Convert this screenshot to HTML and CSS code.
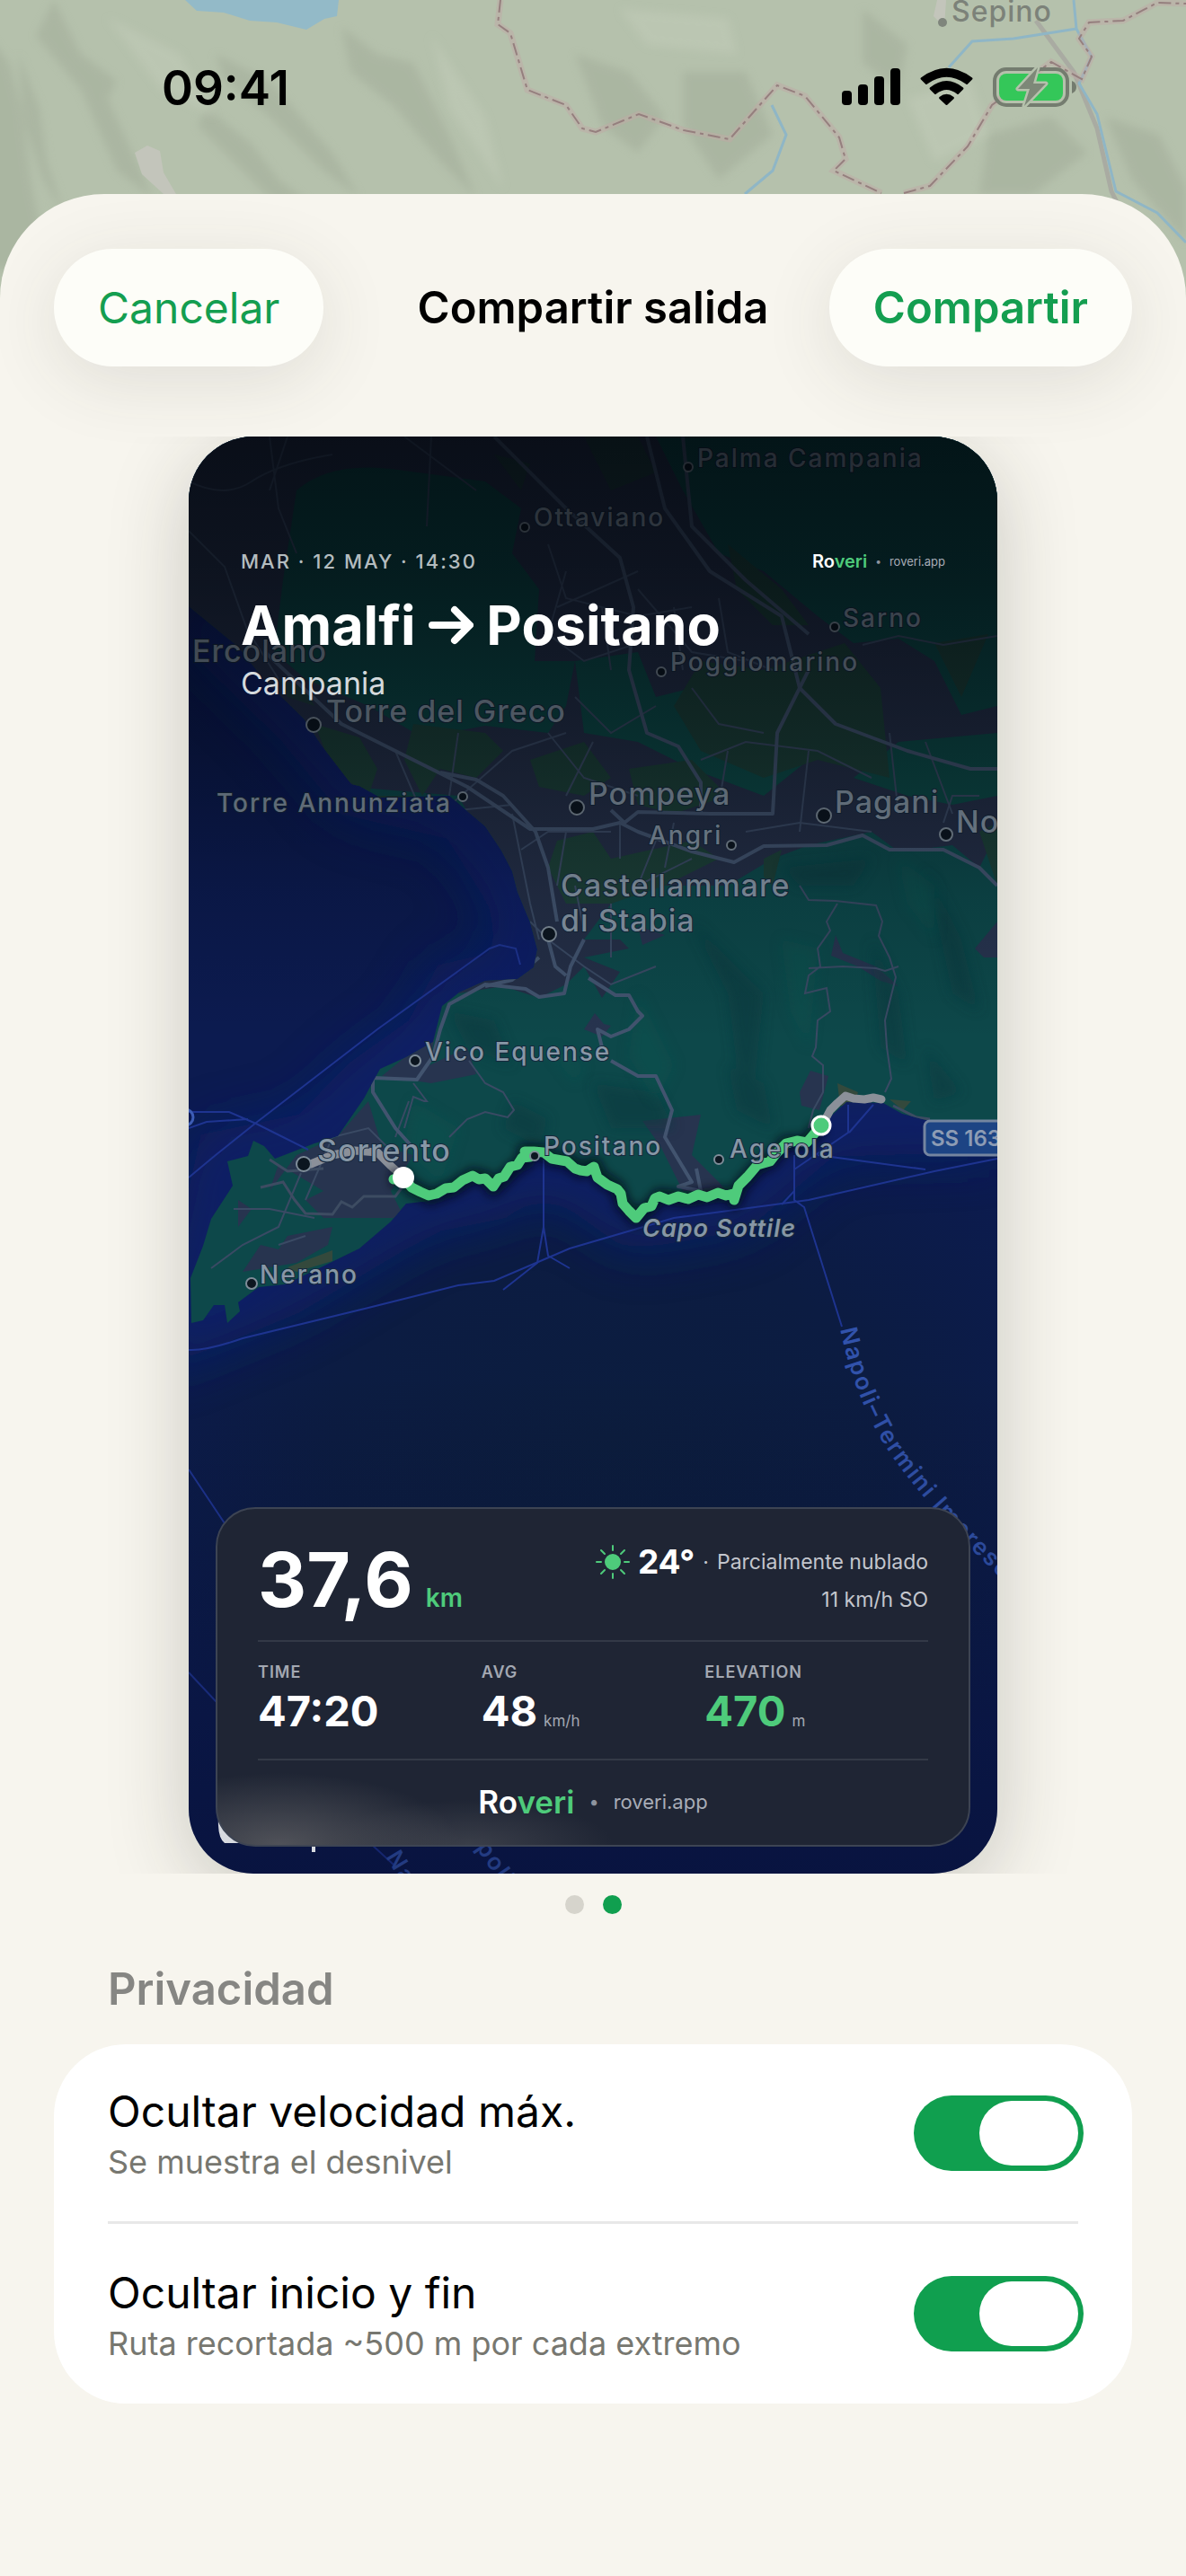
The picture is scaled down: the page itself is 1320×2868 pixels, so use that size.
FILE: index.html
```html
<!DOCTYPE html>
<html lang="es">
<head>
  <meta charset="UTF-8">
  <meta name="viewport" content="width=device-width,initial-scale=1">
  <title>Roveri - Compartir salida</title>
  <link rel="stylesheet" href="styles.css">
</head>
<body>
  <!-- Map behind the sheet -->
  <svg class="backdrop" viewBox="0 0 1320 400" preserveAspectRatio="xMidYMin slice" aria-hidden="true">
    <defs>
      <filter id="soft" x="-20%" y="-20%" width="140%" height="140%"><feGaussianBlur stdDeviation="5"/></filter>
    </defs>
    <rect width="1320" height="400" fill="#b5c1ac"/>
    <g fill="#a4af9b" opacity=".6" filter="url(#soft)">
      <path d="M-20 30l30 40 14 50 10 80 20 100H-20z"/>
      <path d="M20 60l24 60 8 60 20 60-24-40-20-60z"/>
      <path d="M60 0l30 60 40 30-10 20 50 110-40-30-40-90-50-60z"/>
      <path d="M230 120l50 40 30 40 40 30h-40l-50-50-40-40z"/>
      <path d="M240 60l60 30 70 80 30 50-40-30-60-60-50-40z"/>
      <path d="M380 30l40 30 40 10 40 80 30 70-40-40-50-60-50-40z"/>
      <path d="M640 60l60 20 40 50-30 40-40-30zM760 80l70 0 30 70-60 50-40-60z"/>
      <path d="M960 10l50 40-10 50-40-30zM1100 150l70-20 40 40-60 46-60 0z"/>
      <path d="M1230 130l60 20 30 60v60l-60-70z"/>
    </g>
    <g fill="#c2ccb9" opacity=".5" filter="url(#soft)">
      <path d="M120 20l80 40 40 70-60-30zM480 40l60 90 20 80-60-90zM690 10l120 10 10 40-100-10zM1010 110l70-20 20 60-60 30z"/>
    </g>
    <path d="M206 0l13 12 30 2 29 9 30 2 33 8 20-12 14-3 2-18z" fill="#93bac8"/>
    <path d="M150 170l14-8 14 6 4 24 14 24h-14l-24-22z" fill="#c3c5bb"/>
    <path d="M1043 0h10l-2 30-12-12z" fill="#c3c5bb"/>
    <path d="M1153 23l42 57 26 63 16 70 20 40" fill="none" stroke="#a9aba2" stroke-width="5"/>
    <g fill="none" stroke="#8fb6c6" stroke-width="3">
      <path d="M1195 0l3 32 17 31-14 30 20 34 21 86 46 24 32 33"/>
      <path d="M1198 32l-70 11-46 3-26 29"/>
      <path d="M859 117l16 33-15 40-31 26"/>
    </g>
    <g fill="none" stroke="#bfa9a6" stroke-width="7" opacity=".5">
      <path id="border" d="M557 0l-3 27 14 10 19 63 43 17 18 26 15 4 48-20 50 18 51 10 53-60 31 12 38 46 7 24-13 13 53 25M1006 215l29-8 42-44 27-46 66-48 34 19 11-25-14-20 11-18 38-2 38-20 32 1"/>
    </g>
    <use href="#border" fill="none" stroke="#957f7e" stroke-width="2" stroke-dasharray="14 5 4 5"/>
    <circle cx="1049" cy="25" r="5" fill="#7f857c"/>
    <text class="backdrop-label" x="1059" y="24">Sepino</text>
  </svg>

  <div class="statusbar">
    <span class="clock">09:41</span>
    <svg class="status-icons" viewBox="0 0 264 46" aria-hidden="true">
      <rect x="0" y="27" width="11" height="16" rx="4"/>
      <rect x="18" y="20" width="11" height="23" rx="4"/>
      <rect x="36" y="11" width="11" height="32" rx="4"/>
      <rect x="54" y="2" width="11" height="41" rx="4"/>
      <path d="M88 12.500Q116.500-9 145 12.500q1 1 0 2l-5 5q-1 1-2 0-21.500-15.500-43 0-1 1-2 0l-5-5q-1-1 0-2z"/>
      <path d="M98 23.500q18.500-15 37 0 1 1 0 2l-5 5q-1 1-2 0-11.500-9-23 0-1 1-2 0l-5-5q-1-1 0-2z"/>
      <path d="M108.500 34q8-6.500 16 0 1 1 0 2l-7 6.500q-1 1-2 0l-7-6.500q-1-1 0-2z"/>
      <rect x="170" y="3" width="81" height="40" rx="13" fill="none" stroke="#747c6f" stroke-width="4"/>
      <path d="M256 16q5 2 5 7t-5 7z" fill="#747c6f"/>
      <rect x="175" y="8" width="71" height="30" rx="8" fill="#34c759"/>
      <path d="M218 1l-22 24h13l-6 19 24-25h-14z" fill="#7d8878" stroke="#b5c1ac" stroke-width="5" paint-order="stroke" stroke-linejoin="round"/>
    </svg>
  </div>

  <main class="sheet">
    <header class="toolbar">
      <button type="button" class="pill">Cancelar</button>
      <h1>Compartir salida</h1>
      <button type="button" class="pill pill-main">Compartir</button>
    </header>

    <div class="carousel">
      <article class="story">
        <svg class="map" viewBox="0 0 900 1600" preserveAspectRatio="xMidYMid slice" aria-hidden="true">
          <defs>
            <radialGradient id="sea" gradientUnits="userSpaceOnUse" cx="470" cy="1130" r="620" gradientTransform="translate(0 330) scale(1 .7)">
              <stop offset="0" stop-color="#0c1d3e"/>
              <stop offset=".5" stop-color="#0c1c42"/>
              <stop offset="1" stop-color="#0c1b50"/>
            </radialGradient>
            <linearGradient id="shade" x1="0" y1="0" x2="0" y2="1">
              <stop offset="0" stop-color="#000308" stop-opacity=".74"/>
              <stop offset=".1" stop-color="#000308" stop-opacity=".62"/>
              <stop offset=".22" stop-color="#000308" stop-opacity=".38"/>
              <stop offset=".32" stop-color="#000308" stop-opacity=".14"/>
              <stop offset=".42" stop-color="#000308" stop-opacity="0"/>
              <stop offset=".65" stop-color="#000308" stop-opacity="0"/>
              <stop offset="1" stop-color="#00031c" stop-opacity=".3"/>
            </linearGradient>
            <filter id="glow" x="-20%" y="-20%" width="140%" height="140%"><feGaussianBlur stdDeviation="30"/></filter>
            <filter id="hills" x="-20%" y="-20%" width="140%" height="140%"><feGaussianBlur stdDeviation="7"/></filter>
            <filter id="dim" x="-20%" y="-40%" width="140%" height="180%"><feGaussianBlur stdDeviation="5"/></filter>
            <clipPath id="land-clip"><use href="#land"/></clipPath>
            <path id="ferry" d="M725 994Q745 1086 790 1145Q838 1210 920 1286"/>
            <path id="ferry-b" d="M219 1581L290 1700"/>
            <path id="ferry-c" d="M310 1557L386 1669"/>
          </defs>

          <rect width="900" height="1600" fill="url(#sea)"/>
          <path d="M0 189L128 314 190 389 310 417 366 507 388 571 366 604 301 619 272 674 202 724 140 787 43 807 3 987 107 944 225 874 269 851 339 837 395 797 498 870 606 850 704 767 900 761" fill="none" stroke="#0e2070" stroke-width="70" opacity=".8" filter="url(#glow)"/>

          <path id="land" fill="#0d484a" d="M0 0V189L55 234 84 271 128 314 148 344 181 387 190 389 213 402 290 400 310 417 330 434 348 461 360 484 366 507 380 541 388 571 384 591 366 604 330 606 301 619 282 634 272 674 242 691 213 704 202 724 195 737 166 779 140 787 96 804 84 790 72 784 66 801 43 807 49 834 25 871 16 901 2 937 3 987 16 984 28 967 40 967 43 987 57 974 55 964 78 947 107 944 143 927 190 904 225 874 242 854 269 851 295 837 316 823 339 837 366 812 377 806 395 800 421 807 436 817 457 824 477 837 483 854 498 870 515 857 524 846 556 849 606 844 615 834 633 814 665 787 688 786 704 767 721 751 732 741 773 742 794 754 820 761 900 761V0z"/>

          <g clip-path="url(#land-clip)">
            <!-- built up plain -->
            <path fill="#242f47" d="M0 0H900V440L880 480 850 455 790 462 760 440 690 455 650 470 600 500 520 500 470 520 440 560 480 560 490 570 440 580 480 596 460 625 440 590 420 610 390 625 350 612 300 620 250 620 380 540 300 400 180 390 0 200z"/>
            <path fill="#0c4745" d="M120 60Q160 25 240 38L330 50 370 80 360 130 390 170 385 250 430 250 420 300 400 330 330 322 260 335 200 300 130 270 95 240 105 160z"/>
            <path fill="#0c4745" d="M520 0H900V300L860 310 830 250 790 225 740 230 700 200 640 150 590 130 550 60z"/>
            <path fill="#0d4a47" d="M430 250L500 240 520 290 600 270 680 320 690 360 640 400 560 370 500 340 440 330zM740 380L790 340 900 330V400L850 410 800 400z"/>
            <path fill="#1c4038" d="M600 120L660 170 690 210 650 210 610 170zM540 300L570 250 640 260 730 230 770 280 780 380 700 360 640 380 570 350zM830 230L890 220 860 290z"/>
            <path fill="#1c4038" d="M140 320L190 335 210 370 200 400 160 370zM250 320L330 330 350 350 320 380 280 370 260 400 240 360zM200 400L250 400 300 450 340 470 370 550 340 520 320 430zM410 450L450 440 470 470 560 450 590 470 530 500 470 520 420 520 400 480zM380 360L440 340 470 380 440 400 390 390zM490 370L560 360 600 400 540 420 500 410zM640 470L660 460 650 500 640 490zM880 440L900 430V500z"/>
            <path fill="#1c4038" d="M100 270L130 280 140 300 110 290zM440 0H500L520 40 470 60zM340 20L380 30 370 60z" opacity=".7"/>
            <!-- villages and valleys -->
            <path fill="#27344f" d="M242 690L275 660 268 700 310 680 320 710 270 720 215 712zM166 779L200 740 215 790 250 800 225 840 240 870 150 870 130 850 150 840 100 810 90 840 120 800zM505 762L570 755 560 800 590 830 600 842 550 840 525 790zM440 660L452 642 462 654 470 656 460 668zM680 730L692 706 712 712 702 750 682 745zM715 578L720 555 728 575 765 590 790 612 770 606 745 590zM875 570L900 540V580L885 580zM110 890L160 880 155 900 120 920 60 930 80 900 100 905zM55 850L70 860 55 880zM500 545L530 555 505 566z"/>
            <path fill="#34493c" d="M110 925L160 906V918L120 930zM722 720L745 730 740 745 725 745zM780 738L804 740 795 750z"/>
            <!-- hillshade -->
            <g fill="#0a3a40" opacity=".6" filter="url(#hills)">
              <path d="M560 540L610 590 640 620 630 720 610 700 600 620zM760 560L790 620 800 700 770 680zM820 480L860 560 880 640 850 620zM450 720L520 730 540 770 470 770zM360 740L400 760 390 790 350 770zM600 700L640 720 650 770 610 750zM290 640L340 650 360 700 310 680zM820 680L860 730 830 740zM660 480L760 470 740 500 680 500z"/>
            </g>
            <g fill="#10534f" opacity=".5" filter="url(#hills)">
              <path d="M500 620L540 700 520 740 490 690zM660 560L700 570 690 680 670 640zM790 470L830 500 830 560 800 520zM400 680L440 700 430 720zM250 740L300 770 280 830 240 790z"/>
            </g>
            <!-- minor roads -->
            <g fill="none" stroke="#3a4a64" stroke-width="2">
              <path d="M0 50Q40 70 70 50T160 20M90 0L100 80 120 130M0 105L40 145 65 215 100 270M110 0L90 60M270 0L265 100M240 0L320 60"/>
              <path d="M400 120L420 180 500 200 560 190M420 150L400 220 440 250 500 230M410 190L500 150M460 190L470 260M500 170L560 240 620 250M540 190L550 260M590 180L600 240 650 260M750 232L790 222 840 232 900 222"/>
              <path d="M430 290L470 330 520 300M400 330L440 380 500 400M450 340L420 400M560 280L590 320 640 330M570 360L620 340 700 350 760 380M600 350L590 410M690 350L680 440M780 330L790 420M820 340L850 420M230 350L260 420 360 410M300 330L290 400M280 420L360 350 420 330"/>
              <path d="M360 420L380 520 390 560M370 460L400 440 470 440M380 540L400 560 440 590 470 610 520 590M430 500L440 550M470 520L470 580M420 440L410 500M520 450L500 500 560 470M620 440L680 430 760 440M840 430L850 400 880 400M480 430L480 470M540 430L530 480"/>
              <path d="M680 500L690 516 720 517 765 522 772 540 768 556 780 580 787 602 775 650 777 680 782 715 775 730"/>
              <path d="M722 520L710 540 714 550 700 570 703 590 690 600 686 620 710 614 714 640 700 650 698 680 694 690 706 700V730L695 750 690 770M690 592L728 590 765 592 775 595 790 590"/>
              <path d="M312 695L330 720 350 730 362 750 355 758 330 752 310 760 290 780M250 720L265 740 262 740 250 735 240 770M245 740L230 780M130 850L160 780 200 770 230 800M125 820L100 880 60 900 25 926M50 860L90 860 140 870M100 900L130 890"/>
            </g>
            <!-- main roads -->
            <g fill="none" stroke="#42546f" stroke-width="4" stroke-linejoin="round">
              <path d="M340 0L420 80 480 135 495 190 490 260 510 330 545 345 570 385 570 420"/>
              <path d="M510 0L530 80 580 150 660 200 680 280 720 320 800 350 870 370 900 370"/>
              <path d="M550 0L560 100 620 160 690 220M85 240L170 320 310 390 380 437 450 437 480 430 500 440 560 462 607 474 640 456 710 455 750 444 780 460 840 460 880 480 900 500M280 374L320 382 350 400 386 440 400 480 410 540"/>
              <path d="M690 260L655 330 650 420 580 420 500 418 485 430 470 416"/>
              <path d="M445 603L475 622 490 622 500 640 505 645 490 660 470 668 455 660 460 680M470 695L500 712 520 712 538 750 530 780 548 810 560 830 545 835 570 840 565 815"/>
              <path d="M400 560L408 590 420 600M440 560L425 590 418 620 390 624 375 615 330 610 290 632 280 660 272 690 254 716 205 714 205 730 230 770 248 790"/>
              <path d="M330 612L360 605 390 580"/>
            </g>
            <g fill="none" stroke="#3d4c62" stroke-width="3">
              <path d="M90 805L110 818 150 815M80 836L105 830 118 850 130 865 160 866 170 852 182 858 195 846 230 846 242 830M730 745L760 742M784 745L810 758 825 760"/>
            </g>
          </g>

          <!-- ferry lines -->
          <g fill="none" stroke="#1e3490" stroke-width="2">
            <path d="M369 588L364 570 346 566 335 570 210 660 75 764 30 800 0 825"/>
            <path d="M0 752L45 752 75 765 105 780 133 794M0 770L20 763 66 760M395 805V880L388 920 350 950M395 880L400 912 424 926"/>
            <path d="M0 1017Q20 1018 60 1004L200 970 300 945 340 940 424 904 540 870 690 850 830 818 900 804"/>
            <path d="M674 800V850L685 858 727 991M734 744V775L674 816M762 744L735 775M674 840L660 855M700 800L820 816M0 1150L40 1210 60 1250M0 1376L30 1408 130 1500 228 1590"/>
          </g>
          <text class="ferry-label"><textPath href="#ferry">Napoli–Termini Imerese</textPath></text>
          <text class="ferry-label"><textPath href="#ferry-b">Napoli</textPath></text>
          <text class="ferry-label"><textPath href="#ferry-c">apoli</textPath></text>

          <!-- trimmed ends of the ride -->
          <g fill="none" stroke="#8b9099" stroke-width="9" stroke-linecap="round" stroke-linejoin="round">
            <path d="M136 810L160 800 185 795 210 797 225 812 236 822M706 765L714 750 722 742 731 734 740 737 752 738 762 736 771 738"/>
          </g>

          <path d="M224 827L239 825 248 836 269 847 295 837 316 823 330 826 339 837 351 826 366 812 377 806 374 796 395 797 404 804 421 807 436 817 451 811 457 824 477 837 483 854 498 870 515 857 524 846 556 849 589 844 606 844 607 851 615 834 633 814 647 807 665 787 688 786 704 767" fill="none" stroke="#020814" stroke-width="18" stroke-linejoin="round" opacity=".7" filter="url(#dim)"/>
          <path d="M228 827L239 825 248 836 258 841 267 845 276 843 286 837 295 836 305 828 316 823 323 827 330 826 339 835 345 826 351 824 358 813 366 811 371 803 380 802 374 796 384 796 395 797 404 804 421 807 430 815 436 817 443 818 451 813 455 825 466 833 477 838 481 843 483 854 490 862 498 870 507 859 515 857 519 848 524 846 534 850 545 846 556 849 567 844 577 847 589 842 598 845 606 843 607 850 612 834 622 824 633 811 647 807 654 798 665 787 677 784 688 786 694 779 704 767" fill="none" stroke="#4ecb7b" stroke-width="11" stroke-linejoin="round" stroke-linecap="round"/>

          <!-- places -->
          <g class="place-dots">
            <circle cx="556" cy="34" r="5"/><circle cx="374" cy="101" r="5"/><circle cx="719" cy="212" r="5"/>
            <circle cx="526" cy="262" r="5"/><circle cx="139" cy="321" r="8"/><circle cx="305" cy="401" r="5"/>
            <circle cx="432" cy="413" r="8"/><circle cx="707" cy="422" r="8"/><circle cx="843" cy="443" r="7"/>
            <circle cx="604" cy="455" r="5"/><circle cx="401" cy="554" r="8"/><circle cx="252" cy="695" r="6"/>
            <circle cx="128" cy="810" r="8"/><circle cx="385" cy="801" r="5"/><circle cx="590" cy="805" r="5"/>
            <circle cx="70" cy="943" r="6"/>
          </g>
          <g class="place">
            <text x="566" y="34">Palma Campania</text>
            <text x="384" y="100">Ottaviano</text>
            <text x="728" y="212">Sarno</text>
            <text x="536" y="261">Poggiomarino</text>
            <text x="31" y="418">Torre Annunziata</text>
            <text x="512" y="454">Angri</text>
            <text x="263" y="695">Vico Equense</text>
            <text x="395" y="800">Positano</text>
            <text x="602" y="803">Agerola</text>
            <text x="79" y="943">Nerano</text>
            <text class="cape" x="505" y="891">Capo Sottile</text>
          </g>
          <g class="place town">
            <text x="154" y="251" text-anchor="end">Ercolano</text>
            <text x="153" y="318">Torre del Greco</text>
            <text x="445" y="410">Pompeya</text>
            <text x="719" y="419">Pagani</text>
            <text x="854" y="441">No</text>
            <text x="414" y="512">Castellammare</text>
            <text x="414" y="551">di Stabia</text>
            <text x="143" y="807">Sorrento</text>
          </g>
          <rect x="819" y="762" width="110" height="38" rx="6" fill="#1d4484" stroke="#7585a0" stroke-width="3"/>
          <text class="road-no" x="826" y="790">SS 163</text>
          <circle cx="-4" cy="758" r="9" fill="none" stroke="#3d5db5" stroke-width="3"/>

          <rect width="900" height="1600" fill="url(#shade)"/>
          <circle cx="239" cy="825" r="12" fill="#fff"/>
          <circle cx="704" cy="767" r="10" fill="#4ecb7b" stroke="#fff" stroke-width="3"/>
          <path d="M33 1538Q32 1560 40 1566L60 1566V1538zM137 1566h4v10h-4z" fill="#d7dae0"/>
        </svg>

        <div class="story-head">
          <div class="story-meta">
            <span class="date">MAR · 12 MAY · 14:30</span>
            <span class="brand brand-small"><b>Ro<i>veri</i></b> <span class="sep">•</span> <span class="url">roveri.app</span></span>
          </div>
          <h2>Amalfi
            <svg class="arrow" viewBox="0 0 50 44" role="img" aria-label="a"><path d="M4 22H44M29 5L46 22 29 39"/></svg>
            Positano</h2>
          <p>Campania</p>
        </div>

        <div class="panel">
          <div class="summary">
            <div class="distance">37,6<span>km</span></div>
            <div class="weather">
              <div class="weather-now">
                <svg class="sun" viewBox="0 0 38 38" aria-hidden="true">
                  <circle cx="19" cy="19" r="8"/>
                  <path d="M19 1v5M19 32v5M1 19h5M32 19h5M6 6l4 4M28 28l4 4M6 32l4-4M28 10l4-4"/>
                </svg>
                <b>24°</b><span class="sep">·</span><span>Parcialmente nublado</span>
              </div>
              <div>11 km/h SO</div>
            </div>
          </div>
          <dl class="stats">
            <div><dt>TIME</dt><dd>47:20</dd></div>
            <div><dt>AVG</dt><dd>48<small>km/h</small></dd></div>
            <div><dt>ELEVATION</dt><dd class="accent">470<small>m</small></dd></div>
          </dl>
          <div class="brand"><b>Ro<i>veri</i></b> <span class="sep">•</span> <span class="url">roveri.app</span></div>
        </div>
      </article>
    </div>

    <div class="pager"><span></span><span class="active"></span></div>

    <section class="privacy">
      <h3>Privacidad</h3>
      <div class="rows">
        <div class="row">
          <label for="hide-speed">Ocultar velocidad máx.<small>Se muestra el desnivel</small></label>
          <input type="checkbox" id="hide-speed" checked>
        </div>
        <div class="row">
          <label for="hide-ends">Ocultar inicio y fin<small>Ruta recortada ~500 m por cada extremo</small></label>
          <input type="checkbox" id="hide-ends" checked>
        </div>
      </div>
    </section>
  </main>
</body>
</html>
```

FILE: styles.css
```css
* { box-sizing: border-box; }
body { margin: 0; min-height: 100vh; display: flex; flex-direction: column; position: relative; background: #f7f5ee; font-family: Inter, "Liberation Sans", sans-serif; color: #000; }
h1, h2, h3, p, dl, dd { margin: 0; }

/* Map behind the sheet */
.backdrop { position: absolute; top: 0; left: 0; width: 100%; height: 400px; }
.backdrop-label { font-size: 32px; font-weight: 500; fill: #7c8279; letter-spacing: 1px; }

.statusbar { position: relative; height: 216px; padding: 65px 119px 0 180px; display: flex; justify-content: space-between; align-items: flex-start; }
.clock { font-size: 53px; line-height: 66px; font-weight: 600; }
.status-icons { width: 264px; height: 46px; margin-top: 9px; }

.sheet { position: relative; flex: 1; background: #f7f5ee; border-radius: 116px 116px 0 0; padding: 61px 60px 60px; }
.toolbar { display: grid; grid-template-columns: 1fr auto 1fr; align-items: center; margin-bottom: 78px; }
.toolbar h1 { font-size: 49px; line-height: 60px; font-weight: 600; }
.pill { justify-self: start; height: 131px; padding: 0 49px; border: 0; border-radius: 66px; background: #fdfdf8; box-shadow: 0 16px 80px rgba(60,60,50,0.12); color: #149e50; font: 400 48px/60px Inter, "Liberation Sans", sans-serif; cursor: pointer; }
.pill-main { justify-self: end; font-size: 49px; font-weight: 600; }

/* Story card */
.carousel { display: flex; justify-content: center; overflow: hidden; margin: 0 60px; }
.story { position: relative; width: 100%; max-width: 900px; aspect-ratio: 9 / 16; display: flex; flex-direction: column; justify-content: space-between; padding: 122px 30px 30px; border-radius: 72px; overflow: hidden; color: #fff; box-shadow: 0 20px 90px rgba(40,40,30,0.22); }
.map { position: absolute; top: 0; left: 0; width: 100%; height: 100%; }
.place text { font-size: 28px; font-weight: 500; letter-spacing: 2px; fill: #8797a6; paint-order: stroke; stroke: #16283c; stroke-width: 2px; }
.place.town text { font-size: 34px; letter-spacing: 1px; }
.place .cape { font-size: 27px; font-style: italic; font-weight: 600; letter-spacing: 1px; }
.place-dots circle { fill: #0c1620; stroke: #7f8d99; stroke-width: 2px; }
.road-no { font-size: 24px; font-weight: 600; fill: #8d9cb4; }
.ferry-label { font-size: 26px; font-weight: 600; letter-spacing: 2px; fill: #3152ab; }

.story-head { position: relative; padding: 0 28px; }
.story-meta { display: flex; justify-content: space-between; align-items: center; }
.date { font-size: 22px; line-height: 34px; font-weight: 500; letter-spacing: 2px; color: #b4bcbf; }
.story h2 { margin-top: 16px; font-size: 61px; line-height: 76px; font-weight: 700; }
.arrow { width: 50px; height: 44px; fill: none; stroke: #fff; stroke-width: 8; stroke-linecap: round; stroke-linejoin: round; }
.story-head p { margin-top: 6px; font-size: 34px; line-height: 42px; color: #d5dadd; }

.brand { display: flex; align-items: center; justify-content: center; gap: 16px; font-size: 35px; line-height: 44px; }
.brand b { font-weight: 600; }
.brand i { font-style: normal; color: #4ecb7b; }
.brand .sep { font-size: 20px; color: #8e949f; }
.brand .url { font-size: 22px; color: #a8adb7; }
.brand-small { gap: 9px; font-size: 20px; line-height: 24px; }
.brand-small .sep { font-size: 12px; }
.brand-small .url { font-size: 13px; }

.panel { position: relative; padding: 38px 45px 26px; border: 2px solid #3d4453; border-radius: 44px; background: radial-gradient(ellipse 200px 80px at 70px 100%, #505259, rgba(80,82,89,0)), radial-gradient(ellipse 160px 50px at 280px 100%, #3a3e49, rgba(58,62,73,0)), #1f2534; }
.summary { display: flex; justify-content: space-between; align-items: flex-start; height: 108px; }
.distance { font-size: 84px; line-height: 82px; font-weight: 700; }
.distance span { margin-left: 14px; font-size: 28px; font-weight: 600; color: #4ecb7b; }
.weather { text-align: right; font-size: 23px; line-height: 42px; color: #c3c6cd; }
.weather-now { display: flex; align-items: center; gap: 9px; }
.weather-now b { font-size: 37px; color: #fff; }
.sun { width: 38px; height: 38px; fill: #4ecb7b; stroke: #4ecb7b; stroke-width: 2; stroke-linecap: round; }
.stats { display: grid; grid-template-columns: repeat(3, 1fr); height: 134px; padding-top: 22px; border: solid #333947; border-width: 2px 0; }
.stats dt { font-size: 18px; line-height: 24px; font-weight: 600; letter-spacing: 1px; color: #a3a8b2; }
.stats dd { margin-top: 4px; font-size: 47px; line-height: 54px; font-weight: 700; }
.stats small { margin-left: 7px; font-size: 17px; font-weight: 400; color: #a3a8b2; }
.stats .accent { color: #4ecb7b; }
.panel .brand { margin-top: 24px; }

.pager { display: flex; justify-content: center; gap: 21px; margin-top: 24px; }
.pager span { width: 21px; height: 21px; border-radius: 50%; background: #d6d4cc; }
.pager .active { background: #109f4f; }

/* Privacy settings */
.privacy h3 { margin: 54px 60px 31px; font-size: 49px; line-height: 60px; font-weight: 600; color: #868683; }
.rows { border-radius: 80px; background: #fff; padding: 0 60px; }
.row { display: flex; align-items: center; justify-content: space-between; height: 200px; }
.row:first-child { border-bottom: 3px solid #e8e8e8; }
.row label { padding-top: 3px; font-size: 48px; line-height: 62px; }
.row small { display: block; font-size: 36px; line-height: 50px; color: #777770; }
.row input { appearance: none; flex: none; display: flex; justify-content: flex-end; width: 189px; height: 84px; margin: 0 -6px 0 24px; padding: 6px; border-radius: 42px; background: #109f4f; cursor: pointer; }
.row input::before { content: ""; width: 110px; height: 72px; border-radius: 36px; background: #fff; }
.row input:not(:checked) { justify-content: flex-start; background: #d6d4cc; }
```
